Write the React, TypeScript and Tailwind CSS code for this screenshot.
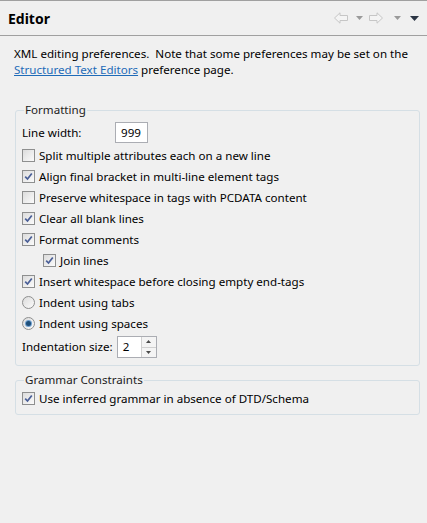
import React from "react";

function Check({ checked }: { checked: boolean }) {
  return (
    <span className="relative inline-flex h-[13px] w-[13px] shrink-0 items-center justify-center border border-[#8e8f8f] bg-gradient-to-br from-[#dcdcdc] to-[#fbfbfb]">
      {checked && (
        <svg width="9" height="9" viewBox="0 0 9 9">
          <path d="M1.2 4.6 L3.5 7 L7.8 1.4" fill="none" stroke="#4a5f97" strokeWidth="1.7" />
        </svg>
      )}
    </span>
  );
}

function Radio({ checked }: { checked: boolean }) {
  return (
    <span className="relative inline-flex h-[13px] w-[13px] shrink-0 items-center justify-center rounded-full border border-[#8e8f8f] bg-gradient-to-br from-[#dcdcdc] to-[#fbfbfb]">
      {checked && <span className="h-[5px] w-[5px] rounded-full bg-[#1e4f7a] ring-1 ring-[#6fa0d0]" />}
    </span>
  );
}

function Row({ children, indent = false }: { children: React.ReactNode; indent?: boolean }) {
  return <div className={`flex h-[21px] items-center gap-[4px] whitespace-nowrap ${indent ? "pl-[21px]" : ""}`}>{children}</div>;
}

export default function App() {
  return (
    <div
      className="h-[523px] w-[427px] bg-[#f0f0f0] text-[11.6px] text-black"
      style={{ fontFamily: '"Noto Sans", "Open Sans", sans-serif' }}
    >
      <div className="flex h-[36px] items-center justify-between border-t border-t-[#a0a0a0] border-b border-b-[#a0a0a0] pl-[8px] pr-[8px]">
        <span className="text-[14px] font-bold">Editor</span>
        <div className="flex items-center">
          <svg width="14" height="12" viewBox="0 0 14 12">
            <path d="M0.5 6 L6 0.8 V3.5 H13.5 V8.5 H6 V11.2 Z" fill="#f4f4f4" stroke="#c6c6c6" />
          </svg>
          <svg width="7" height="4" viewBox="0 0 7 4" className="ml-[8px]"><path d="M0 0 H7 L3.5 4 Z" fill="#9a9a9a" /></svg>
          <svg width="14" height="12" viewBox="0 0 14 12" className="ml-[6px]">
            <path d="M13.5 6 L8 0.8 V3.5 H0.5 V8.5 H8 V11.2 Z" fill="#f4f4f4" stroke="#c6c6c6" />
          </svg>
          <svg width="7" height="4" viewBox="0 0 7 4" className="ml-[11px]"><path d="M0 0 H7 L3.5 4 Z" fill="#9a9a9a" /></svg>
          <svg width="9" height="5" viewBox="0 0 9 5" className="ml-[9px]"><path d="M0 0 H9 L4.5 5 Z" fill="#2b3544" /></svg>
        </div>
      </div>

      <div className="px-[14px] pt-[10px]">
        <p className="whitespace-nowrap leading-[16px]">
          XML editing preferences.&nbsp; Note that some preferences may be set on the
          <br />
          <span className="text-[#1e6bb8] underline">Structured Text Editors</span> preference page.
        </p>

        <fieldset className="mt-[24px] ml-[1px] mr-[-7px] rounded-[3px] border border-[#d5dfe5] px-[6px] pt-[4px] pb-[5px]">
          <legend className="ml-[2px] px-[1px] leading-[16px] text-[#222]">Formatting</legend>
          <div className="flex h-[23px] items-start">
            <span className="flex h-[21px] w-[93px] items-center">Line width:</span>
            <span className="flex h-[21px] w-[33px] items-center border border-[#abadb3] bg-white pl-[5px]">999</span>
          </div>
          <Row><Check checked={false} /><span>Split multiple attributes each on a new line</span></Row>
          <Row><Check checked /><span>Align final bracket in multi-line element tags</span></Row>
          <Row><Check checked={false} /><span>Preserve whitespace in tags with PCDATA content</span></Row>
          <Row><Check checked /><span>Clear all blank lines</span></Row>
          <Row><Check checked /><span>Format comments</span></Row>
          <Row indent><Check checked /><span>Join lines</span></Row>
          <Row><Check checked /><span>Insert whitespace before closing empty end-tags</span></Row>
          <Row><Radio checked={false} /><span>Indent using tabs</span></Row>
          <Row><Radio checked /><span>Indent using spaces</span></Row>
          <div className="flex h-[26px] items-center">
            <span className="mr-[4px]">Indentation size:</span>
            <span className="flex h-[22px] w-[40px] items-center justify-between border border-[#abadb3] bg-white pl-[5px]">
              2
              <span className="flex h-full w-[15px] flex-col border-l border-[#d0d0d0]">
                <span className="flex flex-1 items-center justify-center border-b border-[#d0d0d0] bg-[#f4f4f4]">
                  <svg width="5" height="3" viewBox="0 0 5 3"><path d="M0 3 H5 L2.5 0 Z" fill="#4a4a4a" /></svg>
                </span>
                <span className="flex flex-1 items-center justify-center bg-[#f4f4f4]">
                  <svg width="5" height="3" viewBox="0 0 5 3"><path d="M0 0 H5 L2.5 3 Z" fill="#4a4a4a" /></svg>
                </span>
              </span>
            </span>
          </div>
        </fieldset>

        <fieldset className="mt-[6px] ml-[1px] mr-[-7px] rounded-[3px] border border-[#d5dfe5] px-[6px] pb-[5px]">
          <legend className="ml-[2px] px-[1px] leading-[16px] text-[#222]">Grammar Constraints</legend>
          <Row><Check checked /><span>Use inferred grammar in absence of DTD/Schema</span></Row>
        </fieldset>
      </div>
    </div>
  );
}
